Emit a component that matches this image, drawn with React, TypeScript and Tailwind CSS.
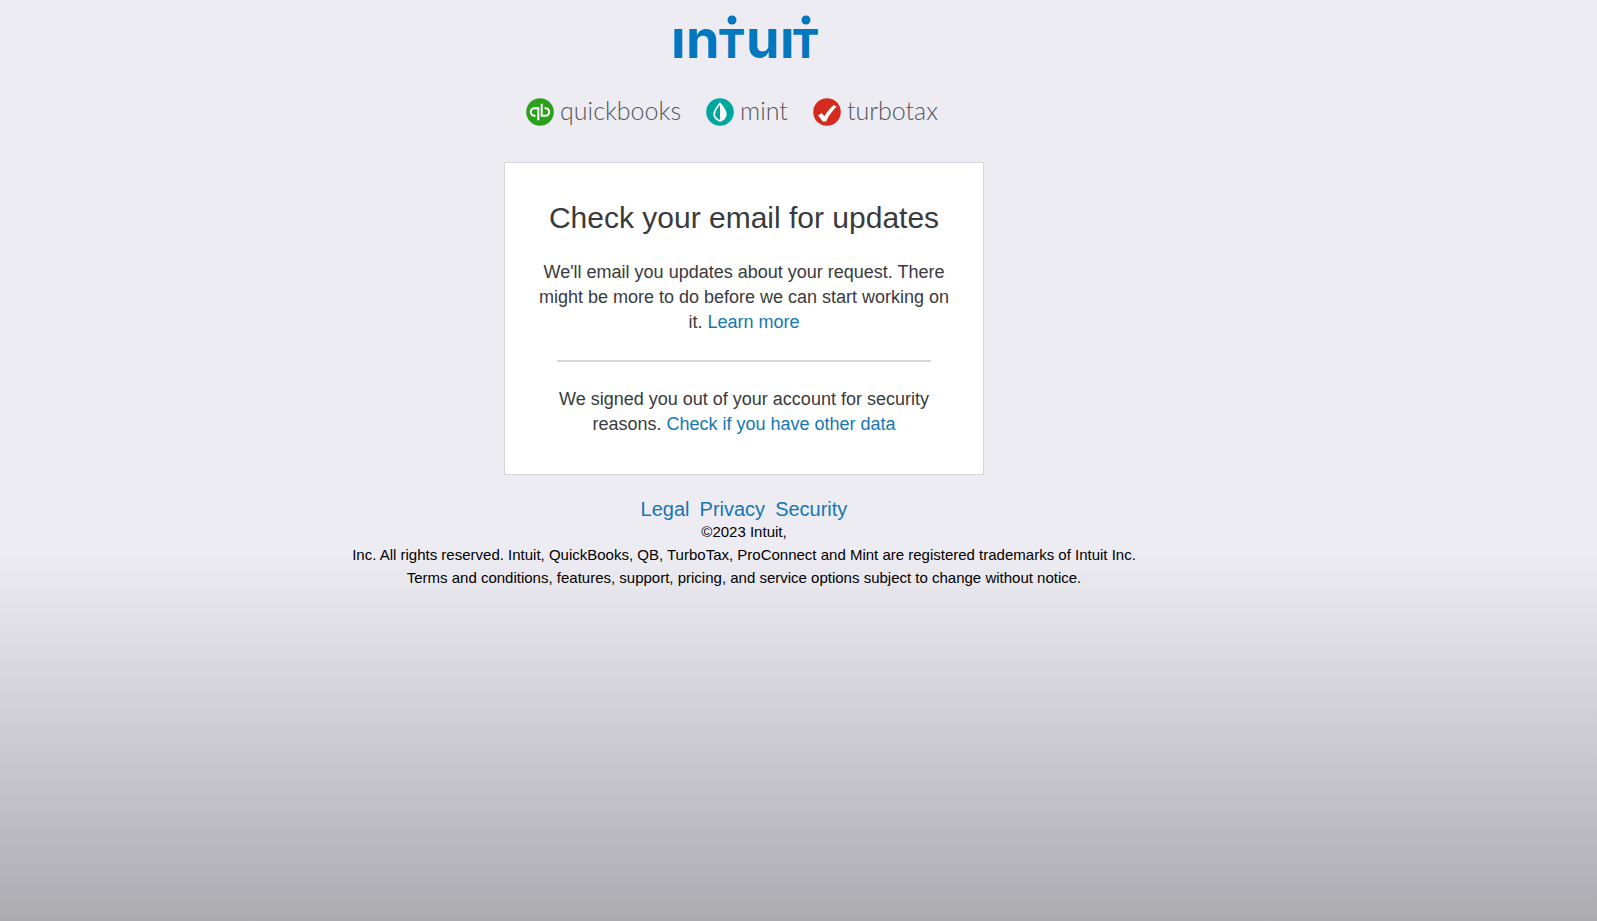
import type { ReactNode } from "react";

interface BrandProps {
  name: string;
  icon: ReactNode;
}

function Brand({ name, icon }: BrandProps) {
  return (
    <div className="flex items-center gap-1.5">
      {icon}
      <span className="pb-1 font-['Lato'] font-light text-[25px] leading-7 text-[#55565c]">
        {name}
      </span>
    </div>
  );
}

function IntuitLogo() {
  return (
    <svg
      role="img"
      aria-label="intuit"
      className="w-[152px] h-[72px] overflow-visible"
      viewBox="-4 -13 152 72"
      fill="#0478bf"
    >
      <g fontFamily="Inter, sans-serif" fontWeight="650" fontSize="54">
        <text x="-1" y="45">ı</text>
        <text x="14" y="45">n</text>
        <text x="74" y="45">u</text>
        <text x="108" y="45">ı</text>
      </g>
      {/* short t with a round dot on top */}
      <g fontFamily="Inter, sans-serif" fontWeight="800" fontSize="40">
        <text x="46" y="45">T</text>
        <text x="120" y="45">T</text>
      </g>
      <circle cx="60" cy="7" r="4.5" />
      <circle cx="134" cy="7" r="4.5" />
    </svg>
  );
}

function QuickbooksIcon() {
  return (
    <svg className="size-7" viewBox="0 0 28 28" fill="none" aria-hidden="true">
      <circle cx="14" cy="14" r="13.8" fill="#2ca01c" />
      <g stroke="#fff" strokeWidth="2">
        <path d="M9.500 17.800H8.600a3.800 3.800 0 0 1 0-7.600h3.700v12" />
        <path d="M18.500 10.200H19.400a3.800 3.800 0 0 1 0 7.600h-3.700v-12" />
      </g>
    </svg>
  );
}

function MintIcon() {
  return (
    <svg className="size-7" viewBox="0 0 28 28" fill="none" aria-hidden="true">
      <circle cx="14" cy="14" r="13.8" fill="#00a6a0" />
      <path
        d="M14 5.500c2.800 3.300 5.800 7 5.800 10.700 0 3-2.300 5.200-5.800 6.800-3.500-1.600-5.800-3.800-5.800-6.800C8.200 12.500 11.200 8.800 14 5.500z"
        stroke="#fff"
        strokeWidth="1.8"
      />
      <path
        d="M14 5.500c2.800 3.300 5.800 7 5.800 10.700 0 3-2.300 5.200-5.800 6.800z"
        fill="#fff"
      />
    </svg>
  );
}

function TurbotaxIcon() {
  return (
    <svg className="size-7" viewBox="0 0 28 28" fill="none" aria-hidden="true">
      <circle cx="14" cy="14" r="13.8" fill="#d52b1e" />
      <path
        d="M5 17.300l3.700-2 2.700 2.900C14 13.800 17 10.200 20.700 7l3 1.600c-4.300 4.200-7.700 8.800-10.600 14.800l-3.300.2z"
        fill="#fff"
      />
    </svg>
  );
}

const footerLinks = ["Legal", "Privacy", "Security"];

export default function App() {
  return (
    <div className="min-h-screen bg-[linear-gradient(to_bottom,#edecf3_60%,#acabb0_100%)] pr-[109px] font-['Liberation_Sans',Arial,sans-serif] text-black">
      <div className="flex flex-col items-center">
        <header className="flex flex-col items-center">
          <IntuitLogo />
          <div className="flex items-center gap-[25px] mt-6 pr-6">
            <Brand name="quickbooks" icon={<QuickbooksIcon />} />
            <Brand name="mint" icon={<MintIcon />} />
            <Brand name="turbotax" icon={<TurbotaxIcon />} />
          </div>
        </header>

        <main className="w-full max-w-[480px] mt-[34px] px-8 pt-[35px] pb-[37px] bg-white border border-[#d4d7dc] text-center text-[18px] leading-[25px] text-[#393a3d]">
          <h1 className="text-[30px] leading-10">Check your email for updates</h1>
          <p className="mt-[22px]">
            We'll email you updates about your request. There might be more to
            do before we can start working on it.{" "}
            <a href="#" className="text-[#1477b3]">
              Learn more
            </a>
          </p>
          <hr className="mx-5 my-[25px] border-t-2 border-[#d4d4d6]" />
          <p>
            We signed you out of your account for security reasons.{" "}
            <a href="#" className="text-[#1477b3]">
              Check if you have other data
            </a>
          </p>
        </main>

        <footer className="mt-[23px] text-center text-[15px] leading-[23px]">
          <nav className="flex justify-center gap-2.5 text-[20px] leading-[22px] text-[#1477b3]">
            {footerLinks.map((label) => (
              <a key={label} href="#">
                {label}
              </a>
            ))}
          </nav>
          <p>©2023 Intuit,</p>
          <p>
            Inc. All rights reserved. Intuit, QuickBooks, QB, TurboTax,
            ProConnect and Mint are registered trademarks of Intuit Inc.
          </p>
          <p>
            Terms and conditions, features, support, pricing, and service
            options subject to change without notice.
          </p>
        </footer>
      </div>
    </div>
  );
}
